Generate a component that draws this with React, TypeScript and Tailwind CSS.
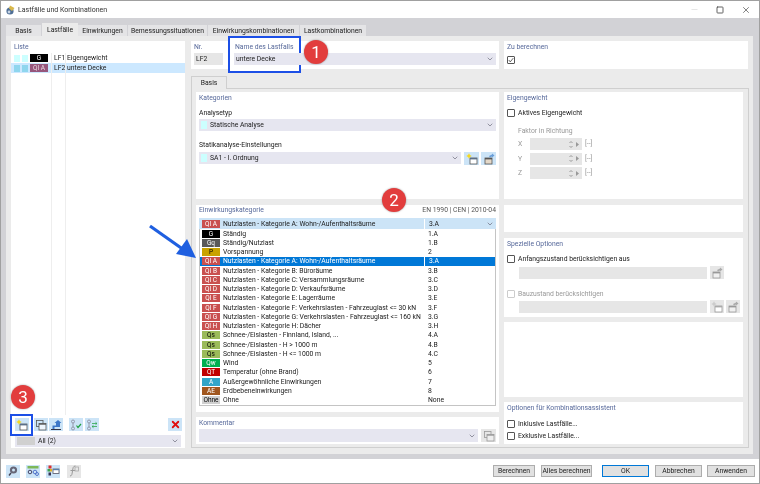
import type { ReactNode } from "react";
import { ChevronDown, Minus, Square, X } from "lucide-react";

const font = "font-['Roboto','Open_Sans',sans-serif]";

const categories = [
  { tag: "G", bg: "bg-black", fg: "text-white", name: "Ständig", code: "1.A" },
  { tag: "Gq", bg: "bg-[#595959]", fg: "text-white", name: "Ständig/Nutzlast", code: "1.B" },
  { tag: "P", bg: "bg-[#c9a200]", fg: "text-black", name: "Vorspannung", code: "2" },
  { tag: "QI A", bg: "bg-[#c9504f]", fg: "text-white", name: "Nutzlasten - Kategorie A: Wohn-/Aufenthaltsräume", code: "3.A", active: true },
  { tag: "QI B", bg: "bg-[#c9504f]", fg: "text-white", name: "Nutzlasten - Kategorie B: Büroräume", code: "3.B" },
  { tag: "QI C", bg: "bg-[#c9504f]", fg: "text-white", name: "Nutzlasten - Kategorie C: Versammlungsräume", code: "3.C" },
  { tag: "QI D", bg: "bg-[#c9504f]", fg: "text-white", name: "Nutzlasten - Kategorie D: Verkaufsräume", code: "3.D" },
  { tag: "QI E", bg: "bg-[#c9504f]", fg: "text-white", name: "Nutzlasten - Kategorie E: Lagerräume", code: "3.E" },
  { tag: "QI F", bg: "bg-[#c9504f]", fg: "text-white", name: "Nutzlasten - Kategorie F: Verkehrslasten - Fahrzeuglast <= 30 kN", code: "3.F" },
  { tag: "QI G", bg: "bg-[#c9504f]", fg: "text-white", name: "Nutzlasten - Kategorie G: Verkehrslasten - Fahrzeuglast <= 160 kN", code: "3.G" },
  { tag: "QI H", bg: "bg-[#c9504f]", fg: "text-white", name: "Nutzlasten - Kategorie H: Dächer", code: "3.H" },
  { tag: "Qs", bg: "bg-[#9bbb59]", fg: "text-black", name: "Schnee-/Eislasten - Finnland, Island, ...", code: "4.A" },
  { tag: "Qs", bg: "bg-[#9bbb59]", fg: "text-black", name: "Schnee-/Eislasten - H > 1000 m", code: "4.B" },
  { tag: "Qs", bg: "bg-[#9bbb59]", fg: "text-black", name: "Schnee-/Eislasten - H <= 1000 m", code: "4.C" },
  { tag: "Qw", bg: "bg-[#00b050]", fg: "text-white", name: "Wind", code: "5" },
  { tag: "QT", bg: "bg-[#c00000]", fg: "text-white", name: "Temperatur (ohne Brand)", code: "6" },
  { tag: "A", bg: "bg-[#31a5c8]", fg: "text-white", name: "Außergewöhnliche Einwirkungen", code: "7" },
  { tag: "AE", bg: "bg-[#a0561e]", fg: "text-white", name: "Erdbebeneinwirkungen", code: "8" },
  { tag: "Ohne", bg: "bg-[#d0d0d0]", fg: "text-black", name: "Ohne", code: "None" },
];

const tabs = ["Basis", "Lastfälle", "Einwirkungen", "Bemessungssituationen", "Einwirkungskombinationen", "Lastkombinationen"];
const tabWidths = ["w-[36px]", "w-[36px]", "w-[50px]", "w-[80px]", "w-[92px]", "w-[67px]"];

function NewIcon({ muted }: { muted?: boolean }) {
  return (
    <svg viewBox="0 0 12 12" className="w-3 h-3">
      <rect x="4" y="5" width="7" height="6" fill="white" stroke={muted ? "#999" : "#555"} strokeWidth="0.8" />
      <rect x="4" y="5" width="7" height="1.4" fill={muted ? "#aaa" : "#5b6f88"} />
      <path d="M3 0.3 L3.9 2.1 5.7 3 3.9 3.9 3 5.7 2.1 3.9 0.3 3 2.1 2.1Z" fill={muted ? "#ccc" : "#f4d820"} />
    </svg>
  );
}

function CopyIcon({ muted }: { muted?: boolean }) {
  const c = muted ? "#999" : "#555";
  return (
    <svg viewBox="0 0 12 12" className="w-3 h-3">
      <rect x="1.5" y="1.5" width="6.5" height="6" fill="none" stroke={c} strokeWidth="0.8" />
      <rect x="4" y="4.5" width="7" height="6.5" fill={muted ? "#eee" : "#eef5fc"} stroke={c} strokeWidth="0.8" />
      <rect x="4" y="4.5" width="7" height="1.2" fill={c} />
    </svg>
  );
}

function BoxArrowIcon({ muted }: { muted?: boolean }) {
  const c = muted ? "#999" : "#555";
  return (
    <svg viewBox="0 0 12 12" className="w-3 h-3">
      <rect x="2" y="5" width="7" height="6" fill={muted ? "#f0f0f0" : "#e4d8c8"} stroke={c} strokeWidth="0.8" />
      <rect x="2" y="5" width="7" height="1.4" fill={c} />
      <path d="M6 3 L9 1.5 9 0.5 11.5 2.5 9 4.5 9 3.5 7 4.5Z" fill={muted ? "#aaa" : "#6a9ed8"} />
    </svg>
  );
}

function ExportIcon() {
  return (
    <svg viewBox="0 0 14 12" className="w-[14px] h-3">
      <path d="M2 10.5 H12" stroke="#334" strokeWidth="1" />
      <path d="M3.5 10 V6.5 H7 V4 H5.5 L9 1 12.5 4 H11 V8 H5.5 V10Z" fill="#3f78c8" />
    </svg>
  );
}

function CheckListIcon({ swap }: { swap?: boolean }) {
  return (
    <svg viewBox="0 0 14 12" className="w-[14px] h-3">
      <circle cx="4" cy="2.5" r="1.5" fill="none" stroke="#889" strokeWidth="0.8" />
      <circle cx="4" cy="9.5" r="1.5" fill="none" stroke="#889" strokeWidth="0.8" />
      <path d="M4 4 V8" stroke="#889" strokeWidth="0.8" />
      {swap ? (
        <path d="M7 4.5 H12 M7 7.5 H12 M10.5 3.3 L12 4.5 10.5 5.7 M8.5 6.3 L7 7.5 8.5 8.7" stroke="#2fa84f" strokeWidth="0.8" fill="none" />
      ) : (
        <path d="M7.5 6.5 L9 8.5 12 5" stroke="#20a040" strokeWidth="1.2" fill="none" />
      )}
    </svg>
  );
}

function IconBtn({ children, muted, w = "w-[14px]" }: { children: ReactNode; muted?: boolean; w?: string }) {
  return (
    <div className={`${w} h-[13px] flex items-center justify-center shrink-0 ${muted ? "bg-[#e6e6e6]" : "bg-[#cce4f7]"}`}>
      {children}
    </div>
  );
}

function Panel({ children, className = "" }: { children?: ReactNode; className?: string }) {
  return <div className={`bg-white px-[3px] ${className}`}>{children}</div>;
}

function Title({ children }: { children: ReactNode }) {
  return <div className="h-[10px] leading-[10px] pt-px text-[#56689a] whitespace-nowrap">{children}</div>;
}

function Select({ children, className = "" }: { children?: ReactNode; className?: string }) {
  return (
    <div className={`h-[12px] bg-[#e6e6f0] flex items-center justify-between pr-[2px] ${className}`}>
      <div className="flex items-center min-w-0">{children}</div>
      <ChevronDown className="w-[8px] h-[8px] text-[#667]" />
    </div>
  );
}

function Check({ checked, muted, label }: { checked?: boolean; muted?: boolean; label?: string }) {
  return (
    <div className="flex items-center h-[10px]">
      <div className={`w-[8px] h-[8px] border rounded-[1px] bg-white flex items-center justify-center ${muted ? "border-[#ccc]" : "border-[#555]"}`}>
        {checked && (
          <svg viewBox="0 0 8 8" className="w-[6px] h-[6px]">
            <path d="M1 4 L3 6.5 7 1.5" stroke="#333" fill="none" />
          </svg>
        )}
      </div>
      {label && <span className={`ml-[3px] whitespace-nowrap ${muted ? "text-[#999]" : ""}`}>{label}</span>}
    </div>
  );
}

function AxisRow({ axis }: { axis: string }) {
  return (
    <div className="flex items-center h-[12px] ml-[11px] text-[#999]">
      <span className="w-[12px]">{axis}</span>
      <div className="w-[52px] h-[12px] bg-[#e6e6e6] flex items-center justify-end pr-[3px] gap-[3px] text-[#999]">
        <svg viewBox="0 0 4 9" className="w-[4px] h-[9px]">
          <path d="M0.5 3 L2 1.5 3.5 3 M0.5 6 L2 7.5 3.5 6" stroke="#999" fill="none" />
        </svg>
        <svg viewBox="0 0 3 5" className="w-[3px] h-[5px]">
          <path d="M0 0 L3 2.5 0 5Z" fill="#999" />
        </svg>
      </div>
      <span className="ml-[3px]">[--]</span>
    </div>
  );
}

function Badge({ tag, bg, fg, className = "" }: { tag: string; bg: string; fg: string; className?: string }) {
  return (
    <div className={`w-[18px] h-[8px] flex items-center justify-center shrink-0 text-[6.5px] leading-[8px] ${bg} ${fg} ${className}`}>
      {tag}
    </div>
  );
}

function Marker({ n, className }: { n: number; className: string }) {
  return (
    <div className={`absolute w-[24px] h-[24px] rounded-full bg-[#e23d3d] text-white text-[17px] leading-[24px] text-center shadow-[0_0_2px_rgba(0,0,0,0.4)] ${className}`}>
      {n}
    </div>
  );
}

function FooterButton({ label, className, primary }: { label: string; className: string; primary?: boolean }) {
  return (
    <div className={`h-[12px] flex items-center justify-center whitespace-nowrap bg-[#e1e1e1] border ${primary ? "border-[#0078d7]" : "border-[#adadad]"} ${className}`}>
      {label}
    </div>
  );
}

export default function App() {
  return (
    <div className={`${font} blur-[0.3px] relative w-[760px] h-[484px] flex flex-col bg-white border border-[#a0a0a0] overflow-hidden text-[6.8px] leading-[10px] text-[#1a1a1a]`}>
      {/* title bar */}
      <div className="h-[17px] shrink-0 flex items-center pl-[4px] pr-[8px] bg-white">
        <svg viewBox="0 0 10 10" className="w-[10px] h-[10px] mr-[3px]">
          <circle cx="5" cy="6" r="3.6" fill="#4f6f96" />
          <path d="M5 0.5 L9.5 3 7 6 4 3.5Z" fill="#d9b84a" />
          <circle cx="4" cy="7" r="1.4" fill="#c7d4e4" />
        </svg>
        <span className="text-[7px] text-[#333]">Lastfälle und Kombinationen</span>
        <div className="ml-auto flex items-center gap-[17px]">
          <Minus className="w-[9px] h-[9px] text-[#ddd]" />
          <Square className="w-[8px] h-[8px] text-[#444]" strokeWidth={2.5} />
          <X className="w-[10px] h-[10px] text-[#444]" strokeWidth={1.6} />
        </div>
      </div>

      {/* tabs + content */}
      <div className="h-[441px] shrink-0 flex flex-col bg-[#d2d2d6] pl-[5px] pr-[6px] pb-[5px]">
        <div className="h-[18px] shrink-0 flex items-end">
          {tabs.map((tab, i) => (
            <div
              key={tab}
              className={`${tabWidths[i]} flex items-center justify-center whitespace-nowrap ${
                i === 1 ? "h-[13px] bg-[#ebebeb]" : "h-[11px] bg-[#e4e4e6] border-r border-[#d2d2d6]"
              }`}
            >
              {tab}
            </div>
          ))}
        </div>

        <div className="flex-1 flex bg-[#ebebeb] pl-[5px] pr-[4px] pt-[5px] pb-[6px] gap-[6px]">
          {/* Liste */}
          <div className="w-[174px] shrink-0 bg-white relative flex flex-col">
            <div className="h-[12px] leading-[12px] pl-[3px] text-[#56689a]">Liste</div>
            <div className="flex-1 relative">
              <div className="absolute left-[40px] top-0 bottom-[3px] w-px bg-[#eeeeee]" />
              <div className="absolute left-[54px] top-0 bottom-[3px] w-px bg-[#eeeeee]" />
              <div className="h-[10px] flex items-center pl-[3px]">
                <div className="w-[6px] h-[7px] bg-[#ccffff]" />
                <div className="w-[6px] h-[7px] bg-[#ccffff] ml-[2px]" />
                <Badge tag="G" bg="bg-black" fg="text-white" className="ml-[2px]" />
                <span className="ml-[6px] w-[13px]">LF1</span>
                <span>Eigengewicht</span>
              </div>
              <div className="h-[10px] flex items-center pl-[3px] bg-[#cce8ff]">
                <div className="w-[6px] h-[7px] bg-[#8fd6ee]" />
                <div className="w-[6px] h-[7px] bg-[#8fd6ee] ml-[2px]" />
                <Badge tag="QI A" bg="bg-[#96567c]" fg="text-[#e8d8e0]" className="ml-[2px]" />
                <span className="ml-[6px] w-[13px]">LF2</span>
                <span>untere Decke</span>
              </div>
            </div>
            <div className="flex items-center h-[13px] pl-[4px] pr-[3px] shrink-0">
              <div className="relative w-[14px] h-[13px] mr-[5px]">
                <IconBtn><NewIcon /></IconBtn>
                <div className="absolute -left-[5px] -top-[4px] w-[23px] h-[22px] border-[2px] border-[#1c4fe6]" />
              </div>
              <IconBtn><CopyIcon /></IconBtn>
              <div className="w-px" />
              <IconBtn><ExportIcon /></IconBtn>
              <div className="w-[6px]" />
              <IconBtn><CheckListIcon /></IconBtn>
              <div className="w-[2px]" />
              <IconBtn><CheckListIcon swap /></IconBtn>
              <div className="ml-auto">
                <IconBtn>
                  <X className="w-[11px] h-[11px] text-[#e01010]" strokeWidth={4} />
                </IconBtn>
              </div>
            </div>
            <div className="mt-[4px] mb-[1px] mx-[4px] h-[12px] bg-[#e6e6f0] flex items-center justify-between pl-[2px] pr-[2px]">
              <div className="flex items-center">
                <div className="w-[18px] h-[8px] bg-[#d0d0d0]" />
                <span className="ml-[3px]">All (2)</span>
              </div>
              <ChevronDown className="w-[8px] h-[8px] text-[#667]" />
            </div>
          </div>

          {/* right column */}
          <div className="w-[558px] shrink-0 flex flex-col">
            <div className="flex gap-[5px] h-[28px] shrink-0">
              <Panel className="w-[308px] relative flex">
                <div className="absolute left-[37px] -top-[5px] w-[73px] h-[37px] bg-white border-[2px] border-[#1c4fe6]" />
                <div className="relative w-[29px] shrink-0">
                  <Title>Nr.</Title>
                  <div className="mt-[2px] h-[12px] bg-[#e6e6e6] pl-[2px] flex items-center">LF2</div>
                </div>
                <div className="relative flex-1 ml-[11px] min-w-0">
                  <div className="pl-[1px]"><Title>Name des Lastfalls</Title></div>
                  <Select className="mt-[2px]"><span className="pl-[2px]">untere Decke</span></Select>
                </div>
              </Panel>
              <Panel className="w-[244px]">
                <Title>Zu berechnen</Title>
                <div className="mt-[4px]"><Check checked /></div>
              </Panel>
            </div>

            <div className="mt-[6px] w-[36px] h-[13px] bg-[#ebebeb] border border-b-0 border-[#cfcfcf] flex items-center justify-center shrink-0 relative top-px z-10">
              Basis
            </div>
            <div className="flex-1 border border-[#cfcfcf] px-[4px] pt-[3px] pb-[3px] flex gap-[5px] min-h-0">
              <div className="w-[303px] shrink-0 flex flex-col">
                <Panel className="h-[107px] shrink-0">
                  <Title>Kategorien</Title>
                  <div className="mt-[6px]">Analysetyp</div>
                  <Select className="mt-px">
                    <div className="w-[6px] h-[8px] bg-[#ccffff] ml-[2px] mr-[3px]" />
                    Statische Analyse
                  </Select>
                  <div className="mt-[9px]">Statikanalyse-Einstellungen</div>
                  <div className="mt-[2px] flex">
                    <Select className="w-[263px]">
                      <div className="w-[6px] h-[8px] bg-[#ccffff] ml-[2px] mr-[3px]" />
                      SA1 - I. Ordnung
                    </Select>
                    <div className="ml-[3px] flex gap-[2px]">
                      <IconBtn w="w-[15px]"><NewIcon /></IconBtn>
                      <IconBtn w="w-[15px]"><BoxArrowIcon /></IconBtn>
                    </div>
                  </div>
                </Panel>

                <Panel className="h-[207px] shrink-0 mt-[6px]">
                  <div className="h-[10px] flex justify-between text-[#56689a]">
                    <span>Einwirkungskategorie</span>
                    <span className="text-[#555]">EN 1990 | CEN | 2010-04</span>
                  </div>
                  <div className="relative mt-[3px]">
                    <div className="h-[11px] bg-[#cce4f7] flex items-center relative">
                      <Badge tag="QI A" bg="bg-[#c9504f]" fg="text-white" className="ml-[3px]" />
                      <span className="ml-[3px] w-[201px] whitespace-nowrap">Nutzlasten - Kategorie A: Wohn-/Aufenthaltsräume</span>
                      <span className="pl-[4px] border-l border-white">3.A</span>
                      <ChevronDown className="w-[8px] h-[8px] text-[#667] ml-auto mr-[2px]" />
                    </div>
                    <div className="absolute left-0 right-0 top-full bg-white border border-t-0 border-[#c4c4c4] z-10">
                      {categories.map((c, i) => (
                        <div key={i} className={`h-[9.26px] flex items-center ${c.active ? "bg-[#0078d7] text-white" : ""}`}>
                          <Badge tag={c.tag} bg={c.bg} fg={c.fg} className="ml-[2px]" />
                          <span className="ml-[3px] w-[201px] whitespace-nowrap">{c.name}</span>
                          <span className={`pl-[4px] ${c.active ? "border-l border-white" : ""}`}>{c.code}</span>
                        </div>
                      ))}
                    </div>
                  </div>
                </Panel>

                <Panel className="h-[27px] shrink-0 mt-[5px]">
                  <Title>Kommentar</Title>
                  <div className="mt-[2px] flex">
                    <div className="w-[279px]"><Select className="h-[13px]" /></div>
                    <div className="ml-[3px]">
                      <IconBtn w="w-[15px]" muted><CopyIcon muted /></IconBtn>
                    </div>
                  </div>
                </Panel>
              </div>

              <div className="w-[239px] shrink-0 flex flex-col">
                <Panel className="h-[107px] shrink-0">
                  <Title>Eigengewicht</Title>
                  <div className="mt-[6px]"><Check label="Aktives Eigengewicht" /></div>
                  <div className="mt-[8px] ml-[11px] text-[#999]">Faktor in Richtung</div>
                  <div className="mt-[2px] flex flex-col gap-[2.5px]">
                    <AxisRow axis="X" />
                    <AxisRow axis="Y" />
                    <AxisRow axis="Z" />
                  </div>
                </Panel>
                <Panel className="h-[27px] shrink-0 mt-[6px]" />
                <Panel className="h-[79px] shrink-0 mt-[6px]">
                  <Title>Spezielle Optionen</Title>
                  <div className="mt-[6px]"><Check label="Anfangszustand berücksichtigen aus" /></div>
                  <div className="mt-[2px] ml-[12px] flex items-center">
                    <div className="w-[188px] h-[12px] bg-[#e6e6e6]" />
                    <div className="ml-[3px]"><IconBtn muted><BoxArrowIcon muted /></IconBtn></div>
                  </div>
                  <div className="mt-[10px]"><Check muted label="Bauzustand berücksichtigen" /></div>
                  <div className="mt-px ml-[12px] flex items-center">
                    <div className="w-[188px] h-[12px] bg-[#e6e6e6]" />
                    <div className="ml-[3px] flex gap-[2px]">
                      <IconBtn muted><NewIcon muted /></IconBtn>
                      <IconBtn muted><BoxArrowIcon muted /></IconBtn>
                    </div>
                  </div>
                </Panel>
                <Panel className="h-[75px] shrink-0 mt-[5px]" />
                <Panel className="h-[42px] shrink-0 mt-[5px]">
                  <Title>Optionen für Kombinationsassistent</Title>
                  <div className="mt-[7px] flex flex-col gap-[2px]">
                    <Check label="Inklusive Lastfälle..." />
                    <Check label="Exklusive Lastfälle..." />
                  </div>
                </Panel>
              </div>
            </div>
          </div>
        </div>
      </div>

      {/* footer */}
      <div className="flex-1 flex items-center pl-[5px] pr-[4px] bg-white">
        <IconBtn>
          <svg viewBox="0 0 12 12" className="w-3 h-3">
            <circle cx="6.5" cy="5" r="3.6" fill="#667" />
            <circle cx="6.5" cy="5" r="1.5" fill="#cce4f7" />
            <path d="M4 8 L2 10.5" stroke="#445" strokeWidth="1.5" />
          </svg>
        </IconBtn>
        <div className="w-[6px]" />
        <IconBtn>
          <svg viewBox="0 0 14 12" className="w-[14px] h-3">
            <rect x="1.5" y="1" width="11" height="2.5" fill="#7db85a" />
            <circle cx="4" cy="7" r="1.8" fill="none" stroke="#446" />
            <circle cx="9" cy="7" r="1.8" fill="none" stroke="#5577cc" />
            <circle cx="11" cy="9" r="1.5" fill="none" stroke="#5577cc" />
          </svg>
        </IconBtn>
        <div className="w-[6px]" />
        <IconBtn>
          <svg viewBox="0 0 14 12" className="w-[14px] h-3">
            <rect x="2.5" y="0.5" width="3" height="3" fill="#d93030" />
            <rect x="1.5" y="4" width="2.5" height="2.5" fill="#40a050" />
            <rect x="4" y="4" width="2" height="2.5" fill="#e0b020" />
            <rect x="2.5" y="7.5" width="2.5" height="3" fill="#335" />
            <rect x="7" y="4" width="6" height="4.5" fill="white" stroke="#556" strokeWidth="0.8" />
            <rect x="7" y="4" width="6" height="1.2" fill="#5b7fa8" />
          </svg>
        </IconBtn>
        <div className="w-[7px]" />
        <IconBtn muted>
          <svg viewBox="0 0 14 12" className="w-[14px] h-3">
            <path d="M3 11 C5 11 5 9 5.5 6 C6 3 6 1 8.5 1 M3.5 5.5 H8" stroke="#999" strokeWidth="1" fill="none" />
            <rect x="8" y="2" width="3.5" height="4" fill="none" stroke="#aaa" strokeWidth="0.8" />
          </svg>
        </IconBtn>
        <div className="ml-auto flex items-center">
          <FooterButton label="Berechnen" className="w-[42px]" />
          <FooterButton label="Alles berechnen" className="w-[51px] ml-[6px]" />
          <FooterButton label="OK" className="w-[47px] ml-[10px]" primary />
          <FooterButton label="Abbrechen" className="w-[47px] ml-[6px]" />
          <FooterButton label="Anwenden" className="w-[48px] ml-[5px]" />
        </div>
      </div>

      {/* annotations */}
      <Marker n={1} className="left-[303px] top-[39px]" />
      <Marker n={2} className="left-[381px] top-[187px]" />
      <Marker n={3} className="left-[10px] top-[384px]" />
      <svg viewBox="0 0 50 36" className="absolute left-[147px] top-[223px] w-[50px] h-[36px]">
        <path d="M2 2 L36 26" stroke="#1f5fe0" strokeWidth="3.2" />
        <path d="M48 34 L28 30 L39 15Z" fill="#1f5fe0" />
      </svg>
    </div>
  );
}
